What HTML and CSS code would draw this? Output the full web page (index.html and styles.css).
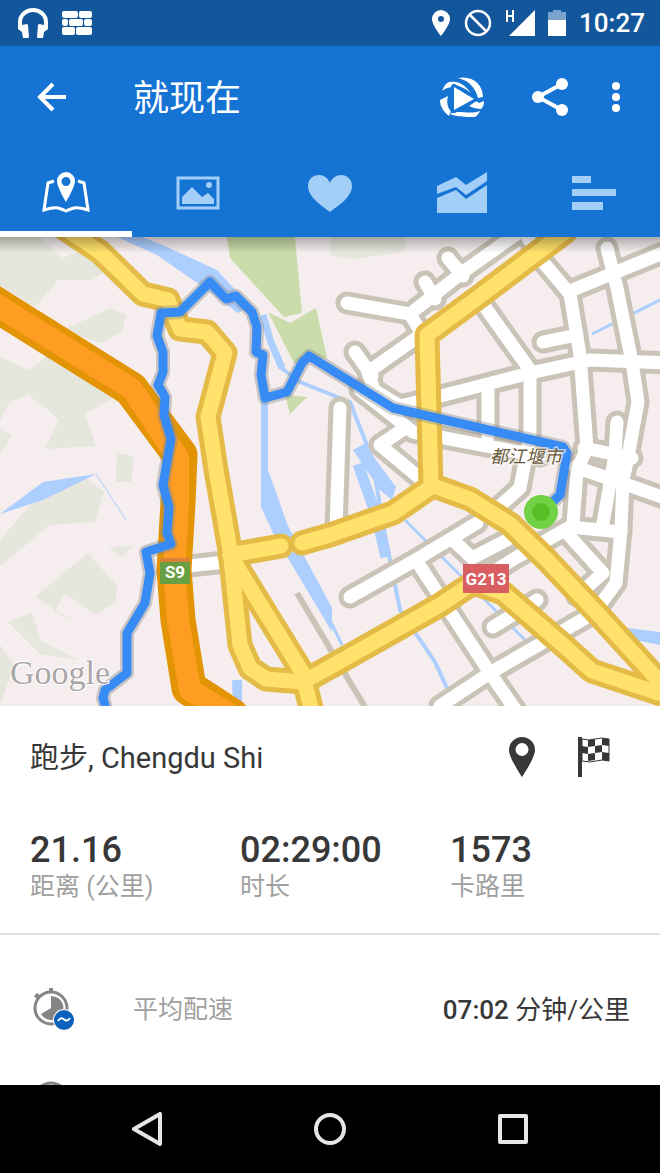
FILE: index.html
```html
<!doctype html>
<html lang="zh-CN">
<head>
<meta charset="utf-8">
<meta name="viewport" content="width=device-width, initial-scale=1">
<title>就现在</title>
<link rel="stylesheet" href="styles.css">
</head>

<body>
	<div class="status">
		<svg width="30" height="30" viewBox="0 0 30 30"><path d="M2 19v-5a13 12 0 0 1 26 0v5" fill="none" stroke="#fff" stroke-width="4"/><path d="M0 16l3 3 1-2 5-1 1 1 1 12-1 1H5l-1-6-4-3zM30 16l-3 3-1-2-5-1-1 1-1 12 1 1h5l1-6 4-3z" fill="#fff"/></svg>
		<svg class="status-bricks" width="30" height="24" viewBox="0 0 30 24" fill="#fff"><rect width="16" height="7" rx="2"/><rect x="17" width="13" height="7" rx="2"/><rect y="8" width="6" height="7" rx="2"/><rect x="7" y="8" width="14" height="7" rx="2"/><rect x="22" y="8" width="8" height="7" rx="2"/><rect y="16" width="13" height="8" rx="2"/><rect x="14" y="16" width="16" height="8" rx="2"/></svg>
		<div class="status-right">
			<svg width="20" height="26" viewBox="0 0 20 26"><path fill="#fff" fill-rule="evenodd" d="M10 0a9 9 0 0 1 9 9c0 6-9 17-9 17S1 15 1 9a9 9 0 0 1 9-9zm0 6a3 3 0 1 0 0 6 3 3 0 0 0 0-6z"/></svg>
			<svg width="28" height="28" viewBox="0 0 28 28" fill="none" stroke="#fff" stroke-width="2.5"><circle cx="14" cy="14" r="12"/><path d="M6 6l16 16"/></svg>
			<svg width="30" height="28" viewBox="0 0 30 28"><path fill="#fff" d="M30 1v26H4z"/><path d="M2 1v12M8 1v12M2 7h6" stroke="#fff" stroke-width="2"/></svg>
			<svg width="18" height="28" viewBox="0 0 18 28"><path fill="#7ba2cc" d="M5 1h8v2h5v8H0V3h5z"/><path fill="#fff" d="M0 11h18v16H0z"/></svg>
			<span>10:27</span>
		</div>
	</div>

	<header class="header">
		<div class="toolbar">
			<button type="button" class="back" aria-label="返回"><svg width="30" height="30" viewBox="0 0 30 30" fill="none" stroke="#fff" stroke-width="4"><path d="M30 15H4M17 2L4 15l13 13"/></svg></button>
			<h1>就现在</h1>
			<button type="button" class="action" aria-label="播放">
				<svg width="44" height="42" viewBox="0 0 44 42" fill="#fff"><path d="M18 2C32-1 43 8 43 21l-5 1C36 14 31 5 18 2zM2 15C4 10 6 7 9 6c12-2 17 5 22 11-5-4-10-7-17-8 3 1 5 2 6 3-7-2-13-1-18 3zM0 24l8-4c-2 8 0 11 3 16l-1 1-1 3C4 36 0 31 0 24zM10 38c7-5 18 1 30-3-2 4-4 6-6 6-9 0-17 0-24-3zM29 30l7-5 3 2 5-2c0 4-1 6-3 8-4 0-8-1-12-3z"/><path d="M14 11v23l20-11z" stroke="#1573d3" stroke-width="6" stroke-linejoin="round"/><path d="M14 11v23l20-11z"/></svg>
			</button>
			<button type="button" class="action" aria-label="分享"><svg width="36" height="38" viewBox="0 0 36 38" fill="#fff"><path d="M30 6L6 19l24 13" fill="none" stroke="#fff" stroke-width="4"/><circle cx="30" cy="6" r="6"/><circle cx="6" cy="19" r="6"/><circle cx="30" cy="32" r="6"/></svg></button>
			<button type="button" class="more" aria-label="更多"><svg width="8" height="30" viewBox="0 0 8 30" fill="#fff"><circle cx="4" cy="4" r="4"/><circle cx="4" cy="15" r="4"/><circle cx="4" cy="26" r="4"/></svg></button>
		</div>
		<nav class="tabs">
			<button type="button" class="tab tab-on" aria-label="地图"><svg width="50" height="42" viewBox="0 0 50 42"><path d="M13 9l-6 2L3 38q10-3 14-2 4 1 8 3 4-2 8-3 4-1 14 2l-4-27-6-2" fill="none" stroke="#fff" stroke-width="3"/><path fill="#fff" fill-rule="evenodd" d="M25 0a9 9 0 0 1 9 9c0 6-9 21-9 21S16 15 16 9a9 9 0 0 1 9-9zm0 5a4 4 0 1 0 0 9 4 4 0 0 0 0-9z"/></svg></button>
			<button type="button" class="tab" aria-label="照片"><svg width="44" height="34" viewBox="0 0 44 34"><path d="M2 2h40v30H2z" fill="none" stroke="#a3cef8" stroke-width="3"/><path fill="#a3cef8" d="M6 21l10-10 10 10 6-4 6 6v5H6z"/><circle cx="33" cy="9" r="3" fill="#a3cef8"/></svg></button>
			<button type="button" class="tab" aria-label="心率"><svg width="44" height="38" viewBox="0 0 44 38"><path fill="#a3cef8" d="M22 38C14 32 0 23 0 12 0 5 5 1 11 1c5 0 9 3 11 8 2-5 6-8 11-8 6 0 11 4 11 11 0 11-14 20-22 26z"/></svg></button>
			<button type="button" class="tab" aria-label="图表"><svg width="50" height="42" viewBox="0 0 50 42" fill="#a3cef8"><path d="M0 14l19-9 10 8L50 0v9L29 23l-10-8-19 7z"/><path d="M0 26l19-8 10 9 21-14v28H0z"/></svg></button>
			<button type="button" class="tab" aria-label="分段"><svg width="44" height="34" viewBox="0 0 44 34" fill="#a3cef8"><path d="M0 0h19v7H0zM0 13h44v7H0zM0 26h31v8H0z"/></svg></button>
		</nav>
	</header>

	<main class="main">
		<svg class="map" viewBox="0 237 660 469">
			<defs>
				<linearGradient id="shade" x1="0" y1="0" x2="0" y2="1">
					<stop offset="0" stop-color="#000" stop-opacity=".28"/>
					<stop offset="1" stop-color="#000" stop-opacity="0"/>
				</linearGradient>
				<!-- minor streets, drawn once for the casing and once for the fill -->
				<g id="streets">
					<path d="M347 303L410 314L430 298L463 272L525 228"/>
					<path d="M410 314L422 334L368 372L374 390L400 406L433 398L530 373L590 360L670 363"/>
					<path d="M448 258L463 276M425 282L435 299M355 352L372 376"/>
					<path d="M360 390L413 432L497 448L540 456"/>
					<path d="M405 428L380 445L422 480"/>
					<path d="M480 300L530 370L530 435L520 488L492 513"/>
					<path d="M488 388V436"/>
					<path d="M520 225L543 262L570 294L580 355L587 448L577 470L573 525"/>
					<path d="M570 291L670 250"/>
					<path d="M607 248L617 288L632 362L638 402L627 462L623 480L621 530L616 583L594 613L490 673L440 706"/>
					<path d="M543 342L577 335"/>
					<path d="M617 422L615 455L603 523"/>
					<path d="M575 467L625 484L670 500"/>
					<path d="M584 448L632 458"/>
					<path d="M350 597L412 562L477 523"/>
					<path d="M418 563L490 673L517 712"/>
					<path d="M453 540L472 558L507 540"/>
					<path d="M480 580L517 557L570 527L621 532"/>
					<path d="M565 531L603 573L577 596"/>
					<path d="M493 627L537 600"/>
					<path d="M340 408L336 530"/>
					<path d="M180 567L225 562"/>
				</g>
				<g id="roads">
					<path d="M55 222L100 252L143 294L168 300L180 329L207 332L225 353L208 417L216 470L230 550L240 645L250 668L266 679L303 682L330 667L440 605L473 583L503 593L563 645L592 671L670 697"/>
					<path d="M230 555L302 672L312 712"/>
					<path d="M230 555L281 546"/>
					<path d="M302 543L330 535L393 513L431 487L427 335L480 296L565 232"/>
					<path d="M431 485L470 499L510 524L547 560L597 613L670 693"/>
				</g>
				<path id="run" d="M107 712L103 698L105 690L127 673V633L145 603L150 573L146 552L171 544L167 533L169 507L163 485L171 439L164 415L165 397L158 385L163 372V352L157 336L161 313L180 312L210 282L226 299L236 296L252 312L257 327L256 352L263 355L261 375L265 398L287 392L302 363L309 356L393 408L563 447L567 453L560 495L547 507"/>
			</defs>
			<path fill="#f5edee" d="M0 237h660v469H0z"/>
			<!-- woodland -->
			<g fill="#e5e6dc">
				<path d="M0 237H40L62 258L92 246L112 268L92 280H58L35 307L0 286z"/>
				<path d="M63 330L110 308L126 315L122 332L100 343z"/>
				<path d="M0 357L30 370L54 350L110 382L116 396L85 414L96 446L45 449L59 420L47 409L28 395L10 402L0 420z"/>
				<path d="M0 430l12 5-12 19zM117 453l17 3-3 26h-15zM0 540L40 494L86 478L104 492L95 522L50 525L0 566z"/>
				<path d="M35 597L88 553L117 586L116 602L96 615L65 594L54 612L72 620z"/>
				<path d="M8 622L32 612L40 640L78 660L40 654L20 634zM109 548l24-3-11 12zM0 645l14 20-14 40z"/>
				<path d="M330 237h75v15l-52 7-23-4z"/>
			</g>
			<g fill="#cadcaa">
				<path d="M227 237H295L302 313L284 317L230 258z"/>
				<path d="M268 312L290 323L316 308L327 358L294 363zM285 395l22 2-17 17z"/>
			</g>
			<!-- rivers -->
			<g fill="#accfff">
				<path d="M117 237L157 255L200 285L238 313L250 306L217 270L165 246L142 237z"/>
				<path d="M261 385h7v85L288 526L332 608V632L273 533L261 507z"/>
				<path d="M0 514L43 482L96 474L43 500zM232 680h10v26h-9z"/>
				<path d="M353 450L364 444L396 487L392 500L380 490z"/>
				<path d="M627 628L660 632V645L630 639z"/>
			</g>
			<g fill="none" stroke="#accfff" stroke-width="4">
				<path stroke-width="7" d="M263 315L270 340L282 368"/>
				<path d="M280 367L300 382L350 402L372 458L384 530L400 610L435 662L448 690"/>
				<path stroke-width="11" d="M358 464L376 515L386 557"/>
				<path stroke-width="3" d="M405 520L460 575L525 640M330 620L342 645M592 334L670 295"/>
				<path stroke-width="1" d="M96 474L126 520"/>
			</g>
			<path d="M297 593L332 652L368 712" fill="none" stroke="#cac4b8" stroke-width="6"/>
			<!-- streets -->
			<g fill="none" stroke-linejoin="round" stroke-linecap="round">
				<use href="#streets" stroke="#cac4b8" stroke-width="23"/>
				<use href="#streets" stroke="#fff" stroke-width="13"/>
				<path d="M-20 294L0 307L131 389L180 455L178 503L174 570L178 620L189 688L232 716" stroke="#e39405" stroke-width="35"/>
				<path d="M-20 294L0 307L132 389L178 458L178 503L174 570L178 620L190 690L232 716" stroke="#ff9d22" stroke-width="22"/>
				<use href="#roads" stroke="#e5bb48" stroke-width="25"/>
				<use href="#roads" stroke="#ffe16b" stroke-width="15"/>
				<use href="#run" stroke="#888" stroke-opacity=".4" stroke-width="14"/>
				<use href="#run" stroke="#368bf5" stroke-width="9"/>
			</g>
			<circle cx="541" cy="512" r="17" fill="#70d244"/>
			<circle cx="541" cy="512" r="9" fill="#56bf25"/>
			<text class="map-city" x="526" y="463">都江堰市</text>
			<path fill="#d98238" d="M160 558h30v5h-30z"/>
			<rect x="160" y="562" width="30" height="22" rx="1" fill="#689f43"/>
			<text class="map-road" x="175" y="578">S9</text>
			<path fill="#d95e62" d="M463 564h46v29h-46z"/>
			<text class="map-road" x="486" y="585">G213</text>
			<text class="map-google" x="10" y="684">Google</text>
			<path fill="url(#shade)" d="M0 237h660v16H0z"/>
		</svg>

		<section class="place">
			<h2>跑步, Chengdu Shi</h2>
			<button type="button" aria-label="起点"><svg width="26" height="40" viewBox="0 0 26 40"><path fill="#383838" fill-rule="evenodd" d="M13 0a13 13 0 0 1 13 13c0 8-13 27-13 27S0 21 0 13A13 13 0 0 1 13 0zm0 6a6 6 0 1 0 0 13 6 6 0 0 0 0-13z"/></svg></button>
			<button type="button" aria-label="终点"><svg width="32" height="40" viewBox="0 0 32 40" fill="#383838"><path d="M0 0h4v40H0z"/><path d="M4 2q7 2 13 0t14 0v22q-7-2-13 0t-14 0z" fill="#fff" stroke="#383838"/><path d="M10 3l7-1v7l-7 1zM24 1l7 1v7l-7-1zM4 9l6 1v7l-6-1zM17 9l7-1v7l-7 1zM10 17l7-1v7l-7 1zM24 15l7 1v8l-7-1z"/></svg></button>
		</section>

		<dl class="stats">
			<div><dd>21.16</dd><dt>距离 (公里)</dt></div>
			<div><dd>02:29:00</dd><dt>时长</dt></div>
			<div><dd>1573</dd><dt>卡路里</dt></div>
		</dl>

		<div class="list">
			<div class="row">
				<svg width="44" height="44" viewBox="0 0 44 44"><path fill="#858585" d="M19 1h4v4h-4zM4 9l3-3 4 3-4 3z"/><circle cx="21" cy="21" r="16" fill="none" stroke="#858585" stroke-width="3"/><path fill="#858585" d="M21 21V9a12 12 0 1 1-10 18z"/><circle cx="34" cy="33" r="11" fill="#fff"/><circle cx="34" cy="33" r="10" fill="#0b61bd"/><path d="M28 34c3-5 5-2 7-1s3 1 5-2" fill="none" stroke="#fff" stroke-width="2"/></svg>
				<span class="row-name">平均配速</span>
				<span class="row-value">07:02 <span class="unit">分钟/公里</span></span>
			</div>
			<div class="row">
				<svg width="44" height="44" viewBox="0 0 44 44" fill="none" stroke="#858585"><circle cx="21" cy="20" r="16" stroke-width="3"/><circle cx="21" cy="20" r="13"/></svg>
			</div>
		</div>
	</main>

	<nav class="navbar">
		<button type="button" aria-label="后退"><svg width="30" height="34" viewBox="0 0 30 34" fill="none" stroke="#e6e6e6" stroke-width="4" stroke-linejoin="round"><path d="M2 17L28 2v30z"/></svg></button>
		<button type="button" aria-label="主屏幕"><svg width="34" height="34" viewBox="0 0 34 34" fill="none" stroke="#e6e6e6" stroke-width="4"><circle cx="17" cy="17" r="14"/></svg></button>
		<button type="button" aria-label="最近"><svg width="30" height="30" viewBox="0 0 30 30" fill="none" stroke="#e6e6e6" stroke-width="4" stroke-linejoin="round"><path d="M2 2h26v26H2z"/></svg></button>
	</nav>
</body>
</html>
```
FILE: styles.css
```css
*{padding: 0;margin: 0;box-sizing: border-box;}
body{
	display: flex;
	flex-direction: column;
	height: 100vh;
	background-color: #fff;
	color: #383838;
	font-family: Roboto, "Noto Sans CJK SC", sans-serif;}
svg{display: block;flex-shrink: 0;}
button{
	display: flex;
	align-items: center;
	justify-content: center;
	border: 0;
	background: none;
	cursor: pointer;}


.status{
	flex: none;
	display: flex;
	align-items: center;
	height: 46px;
	padding: 0 15px 0 18px;
	background-color: #12579c;}
.status-bricks{margin-left: 14px;}
.status-right{
	display: flex;
	align-items: center;
	gap: 13px;
	margin-left: auto;
	color: #fff;
	font-size: 26px;
	font-weight: 500;}


.header{
	flex: none;
	background-color: #1573d3;}
.toolbar{
	display: flex;
	height: 102px;
	padding: 0 22px 0 36px;}
.back{
	width: 97px;
	justify-content: flex-start;}
.toolbar h1{
	flex: 1;
	padding-top: 2px;
	color: #fff;
	font-size: 36px;
	font-weight: 400;
	line-height: 102px;}
.action{width: 88px;}
.more{width: 44px;}
.tabs{
	display: flex;
	height: 89px;}
.tab{flex: 1;}
.tab-on{box-shadow: inset 0 -6px #fff;}


.main{
	flex: 1;
	min-height: 0;
	overflow: hidden;}
.map{
	width: 100%;
	height: auto;}
.map-city{
	fill: #6b5b3a;
	stroke: #fff;
	stroke-opacity: 0.6;
	stroke-width: 3px;
	paint-order: stroke;
	font-size: 18px;
	font-style: italic;
	text-anchor: middle;}
.map-road{
	fill: #fff;
	font-size: 17px;
	font-weight: 700;
	text-anchor: middle;}
.map-google{
	fill: #a9a6a6;
	stroke: #fff;
	stroke-width: 2px;
	paint-order: stroke;
	font-family: "Liberation Serif", serif;
	font-size: 34px;}


.place{
	display: flex;
	align-items: center;
	height: 102px;
	padding: 0 30px;}
.place h2{
	flex: 1;
	padding-bottom: 4px;
	font-size: 29px;
	font-weight: 400;}
.place button{width: 73px;}
.place button:last-child{
	width: 52px;
	justify-content: flex-end;
	padding-right: 20px;
	box-sizing: content-box;}

.stats{
	display: grid;
	grid-template-columns: 1fr 1fr 1fr;
	padding: 21px 0 30px 30px;
	border-bottom: 2px solid #e2e2e2;}
.stats div{
	display: flex;
	flex-direction: column;}
.stats dd{
	font-size: 36px;
	font-weight: 500;
	line-height: 42px;}
.stats dt{
	color: #a0a0a0;
	font-size: 25px;
	line-height: 32px;}


.list{padding-top: 28px;}
.row{
	display: flex;
	align-items: center;
	height: 92px;
	padding: 0 30px;}
.row-name{
	flex: 1;
	margin-left: 59px;
	padding-bottom: 4px;
	color: #a0a0a0;
	font-size: 25px;}
.row-value{
	padding-bottom: 4px;
	font-size: 26px;
	font-weight: 500;}
.unit{font-weight: 400;}


.navbar{
	flex: none;
	display: flex;
	justify-content: center;
	height: 88px;
	background-color: #000;}
.navbar button{width: 183px;}
```
